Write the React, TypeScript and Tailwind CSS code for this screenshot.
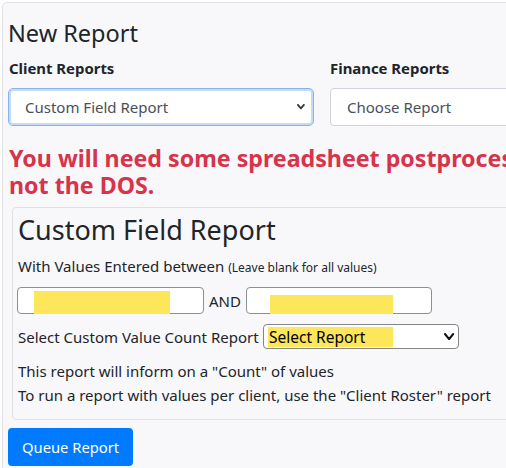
import React from "react";

function Chevron({ w, h, stroke, color }: { w: number; h: number; stroke: number; color: string }) {
  return (
    <svg width={w + stroke} height={h + stroke} viewBox={`${-stroke / 2} ${-stroke / 2} ${w + stroke} ${h + stroke}`}>
      <polyline
        points={`0,0 ${w / 2},${h} ${w},0`}
        fill="none"
        stroke={color}
        strokeWidth={stroke}
        strokeLinecap="round"
        strokeLinejoin="round"
      />
    </svg>
  );
}

export default function App() {
  return (
    <div className="w-[506px] h-[468px] overflow-hidden bg-white pl-[2px] pt-[2px] font-['Noto_Sans',sans-serif] text-[#212529]">
      <div className="w-[900px] border border-[#e2e2e6] rounded-[5px] bg-[#f8f8fa] pl-[5px] pr-[5px] pt-[16px] pb-[20px]">
        <h4 className="text-[23.5px] leading-[29px] font-normal">New Report</h4>

        <div className="mt-[8px] flex gap-[16px]">
          <div className="w-[306px] flex flex-col">
            <label className="text-[14.9px] leading-[24px] font-bold pl-[1px]">Client Reports</label>
            <div className="mt-[8px] h-[38px] rounded-[5px] border border-[#86b3ee] bg-white shadow-[inset_0_0_0_2px_#c6dbf8] flex items-center pl-[16px] pr-[8px]">
              <span className="flex-1 text-[15px] text-[#495057]">Custom Field Report</span>
              <Chevron w={6} h={3.5} stroke={1.8} color="#343a40" />
            </div>
          </div>
          <div className="w-[306px] flex flex-col">
            <label className="text-[14.9px] leading-[24px] font-bold">Finance Reports</label>
            <div className="mt-[8px] h-[38px] rounded-[4px] border border-[#ced4da] bg-white flex items-center pl-[16px] pr-[8px]">
              <span className="flex-1 text-[15px] text-[#495057]">Choose Report</span>
            </div>
          </div>
        </div>

        <div className="mt-[19px] text-[23.2px] leading-[27px] font-bold text-[#d7334a] whitespace-nowrap pl-[1px]">
          You will need some spreadsheet postprocessing for this report,
          <br />
          not the DOS.
        </div>

        <div className="mt-[8px] ml-[4px] w-[700px] border border-[#dfdfe4] rounded-[4px] bg-[#f8f8fa] pl-[5px] pt-[5px] pb-[12px]">
          <h3 className="text-[27px] leading-[34px] font-normal">Custom Field Report</h3>
          <div className="mt-[7px] text-[15px] leading-[24px] whitespace-nowrap">
            With Values Entered between <span className="text-[12px]">(Leave blank for all values)</span>
          </div>

          <div className="mt-[7px] flex items-center">
            <div className="ml-[-1px] w-[187px] h-[27px] rounded-[4px] border border-[#8f8f8f] bg-white pl-[16px] pt-[3px]">
              <div className="w-[136px] h-[23px] bg-[#fde659]" />
            </div>
            <span className="w-[42px] pl-[5px] text-[15px] leading-[24px]">AND</span>
            <div className="w-[186px] h-[27px] rounded-[4px] border border-[#8f8f8f] bg-white pl-[23px] pt-[7px]">
              <div className="w-[123px] h-[19px] bg-[#fde659]" />
            </div>
          </div>

          <div className="mt-[10px] flex items-center">
            <span className="w-[245px] text-[15px] leading-[24px] whitespace-nowrap">Select Custom Value Count Report</span>
            <div className="w-[196px] h-[25px] rounded-[4px] border border-[#858585] bg-white flex items-center pl-[4px] pr-[4px]">
              <div className="flex-1">
                <div className="w-[125px] h-[20px] bg-[#fde659] flex items-center pl-[1px] text-[15.5px] text-black leading-[20px]">
                  Select Report
                </div>
              </div>
              <Chevron w={8} h={5} stroke={2.2} color="#111" />
            </div>
          </div>

          <div className="mt-[10px] text-[15px] leading-[24px] whitespace-nowrap">
            This report will inform on a "Count" of values
          </div>
          <div className="text-[15px] leading-[24px] whitespace-nowrap">
            To run a report with values per client, use the "Client Roster" report
          </div>
        </div>

        <button className="mt-[8px] w-[125px] h-[38px] rounded-[4px] bg-[#007bff] text-white text-[14.75px] text-left pl-[14px]">
          Queue Report
        </button>
      </div>
    </div>
  );
}
